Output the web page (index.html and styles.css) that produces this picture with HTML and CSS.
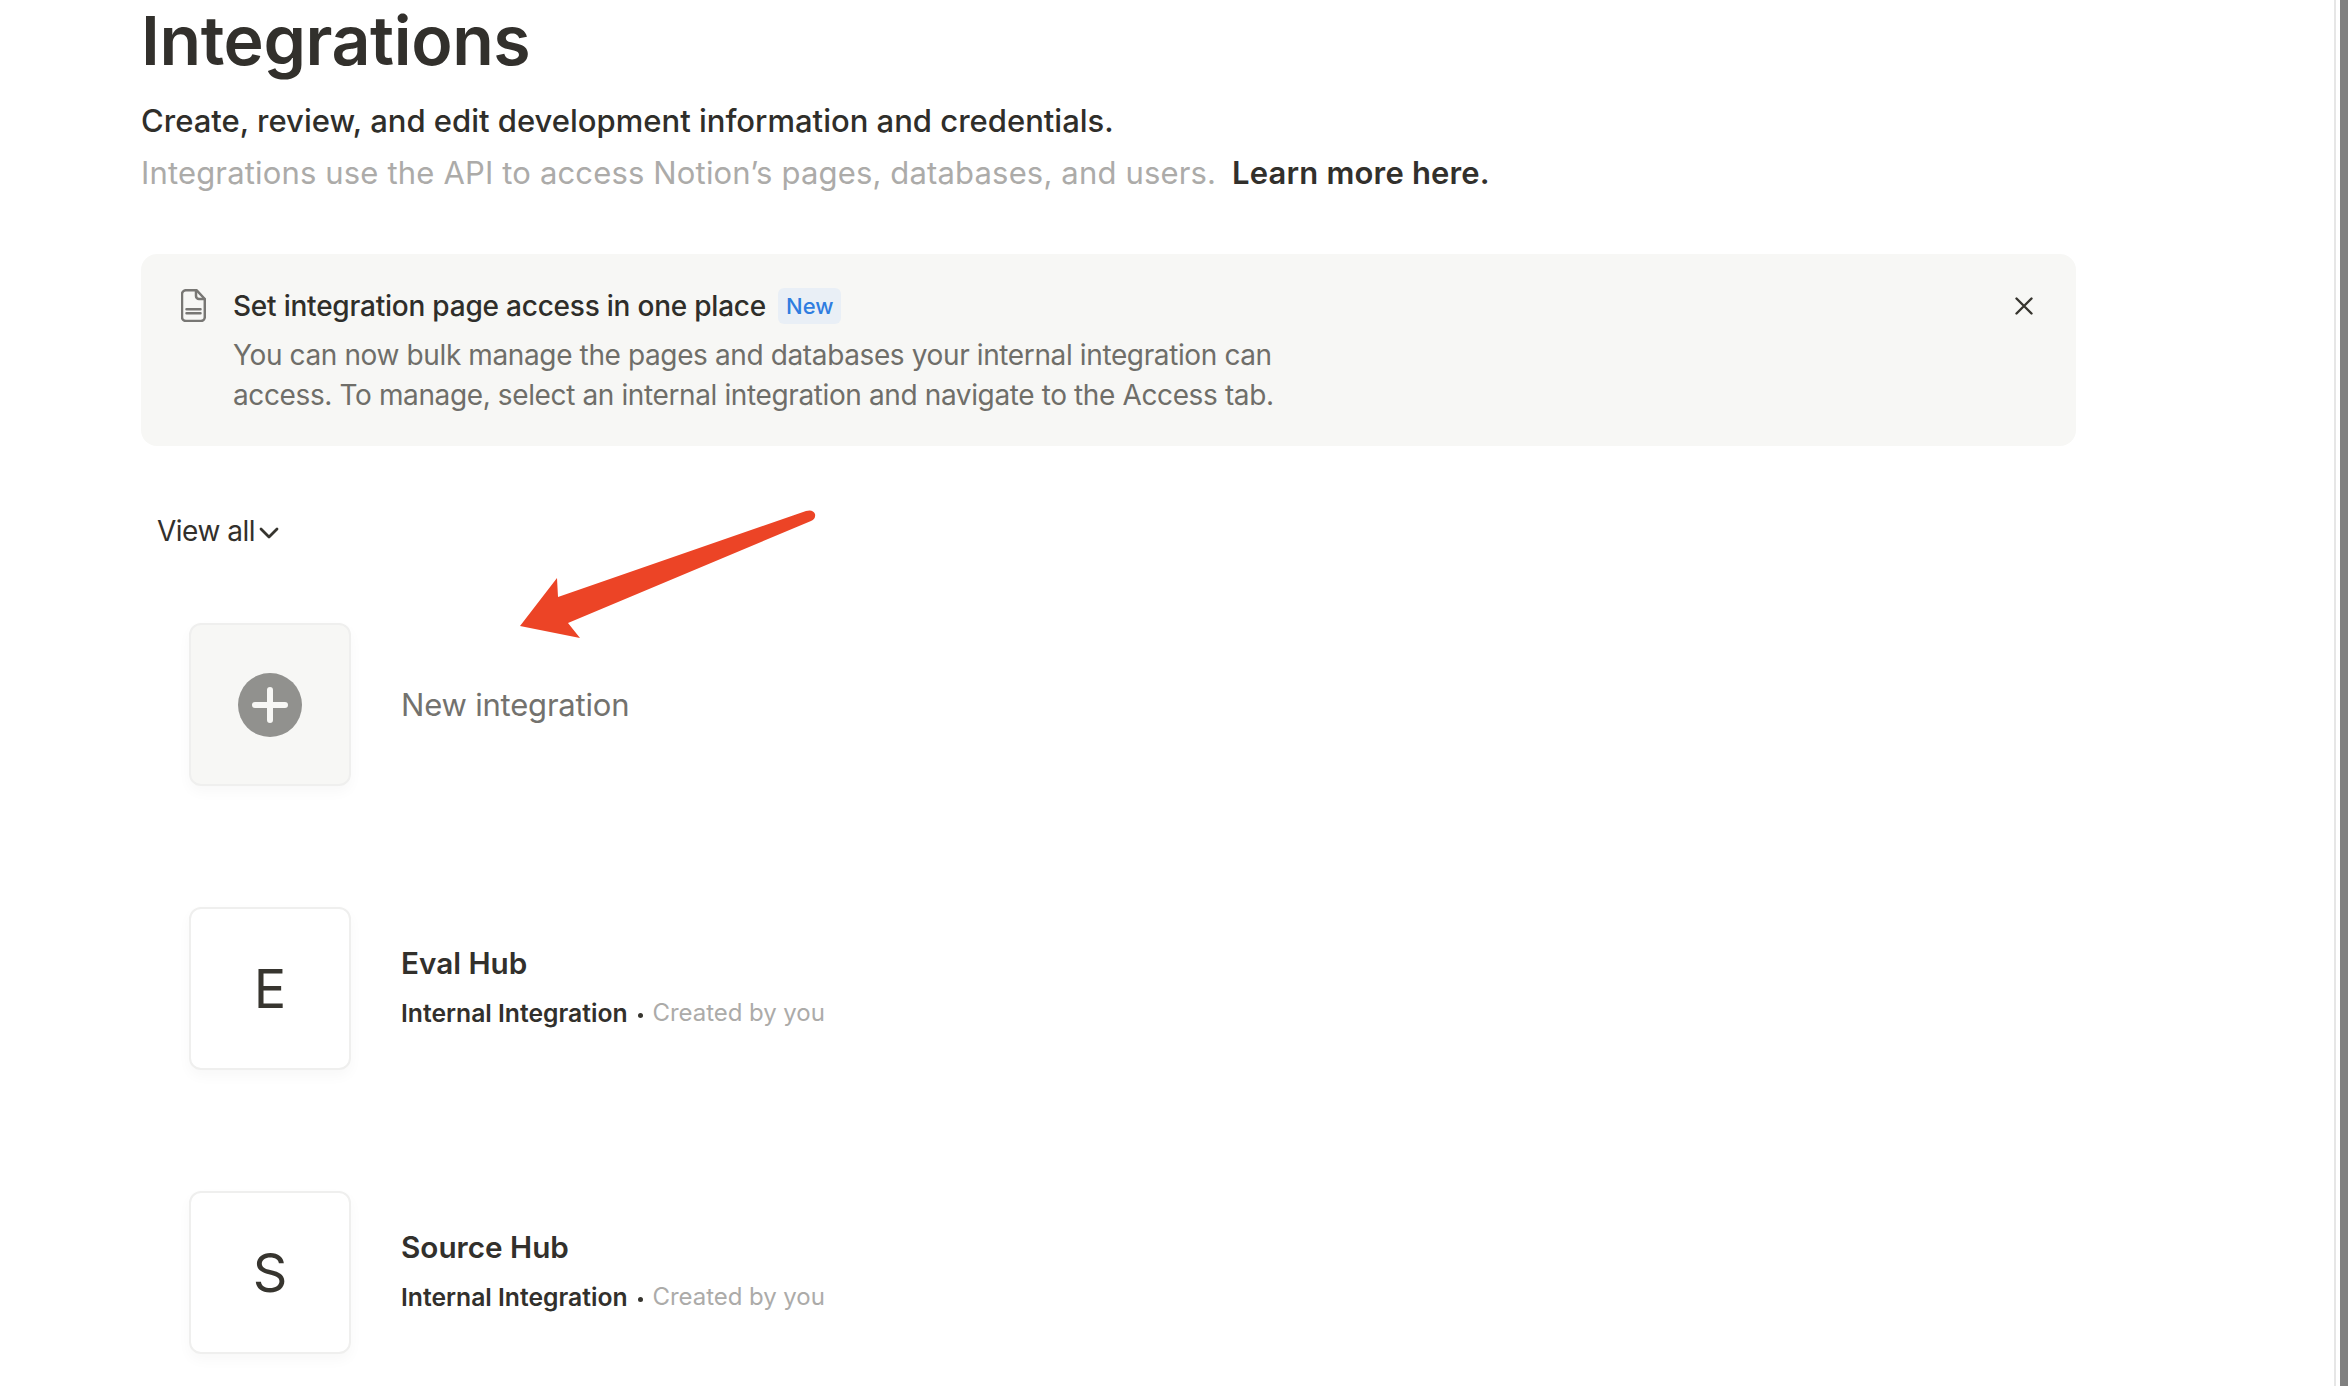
FILE: index.html
```html
<!DOCTYPE html>
<html lang="en">
<head>
<meta charset="utf-8">
<title>Integrations</title>
<link rel="stylesheet" href="styles.css">
</head>
<body>
<div class="page">
  <main class="main">
    <h1 class="title">Integrations</h1>
    <p class="lead">Create, review, and edit development information and credentials.</p>
    <p class="sublead">Integrations use the API to access Notion’s pages, databases, and users. <a class="learn">Learn more here.</a></p>

    <section class="banner">
      <svg class="doc-icon" viewBox="0 0 25 33" fill="none" stroke="#787774" stroke-width="2.5" stroke-linejoin="round" stroke-linecap="round">
        <path d="M5 1.2h10.5L23.8 10v18a4 4 0 0 1-4 4H5a4 4 0 0 1-4-4V5a4 4 0 0 1 4-3.800z"/>
        <path d="M15 1.500V7a3 3 0 0 0 3 3h5.500"/>
        <path d="M5.500 20.300h14M5.500 24.300h14"/>
      </svg>
      <div class="banner-body">
        <div class="banner-head">
          <span class="banner-title">Set integration page access in one place</span>
          <span class="badge">New</span>
        </div>
        <p class="banner-text">You can now bulk manage the pages and databases your internal integration can<br>access. To manage, select an internal integration and navigate to the Access tab.</p>
      </div>
      <svg class="close-icon" viewBox="0 0 18 18" fill="none" stroke="#37352f" stroke-width="2.4" stroke-linecap="round">
        <path d="M1.500 1.500l15 15M16.500 1.500l-15 15"/>
      </svg>
    </section>

    <div class="filter">
      <span>View all</span>
      <svg class="chevron" viewBox="0 0 20 12" fill="none" stroke="#37352f" stroke-width="2.800" stroke-linecap="round" stroke-linejoin="round">
        <path d="M2 2l8 8 8-8"/>
      </svg>
    </div>

    <ul class="list">
      <li class="row">
        <div class="tile tile-new">
          <svg class="plus" viewBox="0 0 64 64">
            <circle cx="32" cy="32" r="32" fill="#91918e"/>
            <path d="M32 17v30M17 32h30" stroke="#f7f7f5" stroke-width="6" stroke-linecap="round"/>
          </svg>
        </div>
        <div class="new-label">New integration</div>
      </li>
      <li class="row">
        <div class="tile">E</div>
        <div class="info">
          <div class="name">Eval Hub</div>
          <div class="meta"><b class="kind">Internal Integration</b><i class="dot"></i><span class="owner">Created by you</span></div>
        </div>
      </li>
      <li class="row">
        <div class="tile">S</div>
        <div class="info">
          <div class="name">Source Hub</div>
          <div class="meta"><b class="kind">Internal Integration</b><i class="dot"></i><span class="owner">Created by you</span></div>
        </div>
      </li>
    </ul>
  </main>
  <aside class="scrollbar"><div class="thumb"></div></aside>
</div>
<svg class="arrow" viewBox="0 0 2348 1386">
  <path fill="#ec4426" d="M520 626L557 578L558 597L806 511Q813 509 815 514Q816 519 811 521L568 623L580 638Z"/>
</svg>
</body>
</html>
```
FILE: styles.css
```css
* { box-sizing: border-box; }
html, body { margin: 0; height: 100%; }
body { background: #fff; font-family: Inter, "Liberation Sans", sans-serif; color: #37352f; overflow: hidden; }
.page { display: flex; height: 1386px; }
.main { flex: 1; min-width: 0; padding: 0 0 0 141px; overflow: hidden; }
.title { margin: 0; font-size: 68px; line-height: 80px; font-weight: 600; letter-spacing: -0.4px; color: #32302c; }
.lead { margin: 20px 0 0; font-size: 31px; line-height: 42px; font-weight: 500; color: #2f2e2a; }
.sublead { margin: 10px 0 0; font-size: 31px; line-height: 42px; letter-spacing: 0.16px; color: #acaba9; }
.learn { margin-left: 7px; font-weight: 600; letter-spacing: 0.18px; color: #32302c; }
.banner { display: flex; align-items: flex-start; width: 1935px; height: 192px; margin-top: 60px; padding: 33px 43px 0 40px; background: #f7f7f5; border-radius: 16px; }
.doc-icon { width: 25px; height: 33px; flex: none; margin-top: 2px; }
.banner-body { flex: 1; margin-left: 27px; }
.banner-head { display: flex; align-items: center; height: 38px; }
.banner-title { font-size: 28px; font-weight: 500; letter-spacing: -0.22px; color: #2f2e2a; }
.badge { margin-left: 12px; padding: 0 8px; height: 36px; line-height: 36px; font-size: 22px; font-weight: 500; color: #2f7de0; background: #e9eff6; border-radius: 6px; }
.banner-text { margin: 10px 0 0; font-size: 28px; line-height: 40px; letter-spacing: -0.38px; color: #6f6e69; }
.close-icon { width: 18px; height: 18px; flex: none; margin-top: 10px; }
.filter { display: flex; align-items: center; gap: 4px; margin: 65px 0 0 16px; height: 40px; font-size: 28px; letter-spacing: -0.5px; color: #32302c; }
.chevron { width: 20px; height: 12px; margin-top: 3px; }
.list { list-style: none; margin: 72px 0 0 48px; padding: 0; display: flex; flex-direction: column; gap: 121px; }
.row { display: flex; align-items: center; gap: 50px; }
.tile { width: 162px; height: 163px; flex: none; display: flex; align-items: center; justify-content: center; background: #fff; border: 2px solid #efefee; border-radius: 12px; box-shadow: 0 6px 14px rgba(15, 15, 15, 0.03); font-size: 54px; color: #37352f; }
.tile-new { background: #f7f7f5; }
.plus { width: 64px; height: 64px; }
.new-label { font-size: 31px; letter-spacing: -0.2px; color: #73726e; }
.info { display: flex; flex-direction: column; gap: 17px; padding-bottom: 4px; }
.name { font-size: 29.700px; line-height: 36px; font-weight: 600; color: #32302c; }
.meta { display: flex; align-items: center; font-size: 24px; line-height: 30px; }
.kind { font-size: 24.700px; font-weight: 600; color: #32302c; }
.dot { width: 5px; height: 5px; margin: 4px 10px 0 10px; border-radius: 50%; background: #37352f; }
.owner { letter-spacing: -0.05px; color: #acaba9; }
.scrollbar { width: 14px; flex: none; display: flex; justify-content: flex-end; background: #fff; border-left: 2px solid #e6e6e6; }
.thumb { width: 8px; background: #808080; }
.arrow { position: absolute; left: 0; top: 0; width: 2348px; height: 1386px; pointer-events: none; }
```
